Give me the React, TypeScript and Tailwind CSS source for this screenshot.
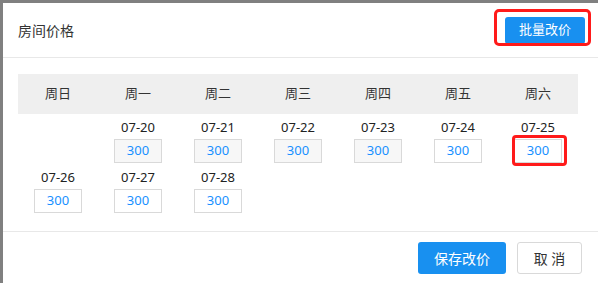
const weekdays = ["周日", "周一", "周二", "周三", "周四", "周五", "周六"];

type Day = { date: string; price: number; past?: boolean; marked?: boolean } | null;

const rows: Day[][] = [
  [
    null,
    { date: "07-20", price: 300, past: true },
    { date: "07-21", price: 300, past: true },
    { date: "07-22", price: 300, past: true },
    { date: "07-23", price: 300, past: true },
    { date: "07-24", price: 300 },
    { date: "07-25", price: 300, marked: true },
  ],
  [
    { date: "07-26", price: 300 },
    { date: "07-27", price: 300 },
    { date: "07-28", price: 300 },
    null,
    null,
    null,
    null,
  ],
];

function DayCell({ day }: { day: Day }) {
  if (!day) return <div className="h-[50px]" />;
  return (
    <div className="relative flex h-[50px] flex-col items-center pt-[3px]">
      <div className="h-5 text-[13px] leading-5 text-[#222]">{day.date}</div>
      <div
        className={`mt-[2px] flex h-6 w-12 items-center justify-center border border-[#d9d9d9] text-[13px] text-[#1890ff] ${
          day.past ? "bg-[#f7f7f7]" : "bg-white"
        }`}
      >
        {day.price}
      </div>
      {day.marked && (
        <div className="absolute left-[14px] top-[21px] h-[31px] w-[55px] rounded-[4px] border-[3px] border-[#ff1a1a]" />
      )}
    </div>
  );
}

export default function App() {
  return (
    <div
      className="h-[283px] w-[598px] overflow-hidden bg-[#808080] pl-[3px] pt-[3px]"
      style={{ fontFamily: '"Noto Sans", "Noto Sans CJK SC", sans-serif' }}
    >
      <div className="flex h-full flex-col bg-white">
        <div className="flex h-[55px] items-center justify-between border-b border-[#e8e8e8] pl-[15px] pr-[13px]">
          <div className="text-[14px] text-[#333]">房间价格</div>
          <div className="relative">
            <button className="h-[27px] w-20 rounded-[3px] bg-[#1890f0] text-[13px] text-white">批量改价</button>
            <div className="absolute -left-[11px] -top-[7px] h-[37px] w-[97px] rounded-[5px] border-[3px] border-[#ff1a1a]" />
          </div>
        </div>

        <div className="pb-[17px] pl-[15px] pr-5 pt-4">
          <div className="grid h-10 grid-cols-7 items-center bg-[#efefef]">
            {weekdays.map((w) => (
              <div key={w} className="text-center text-[13px] text-[#333]">
                {w}
              </div>
            ))}
          </div>
          {rows.map((row, i) => (
            <div key={i} className="grid grid-cols-7">
              {row.map((d, j) => (
                <DayCell key={j} day={d} />
              ))}
            </div>
          ))}
        </div>

        <div className="flex flex-1 justify-end gap-[11px] border-t border-[#e8e8e8] pr-4 pt-[10px]">
          <button className="h-8 w-[88px] rounded-[3px] bg-[#1890f0] text-[14px] text-white">保存改价</button>
          <button className="h-8 w-[65px] rounded-[3px] border border-[#d9d9d9] bg-white text-[14px] text-[#333]">
            取 消
          </button>
        </div>
      </div>
    </div>
  );
}
